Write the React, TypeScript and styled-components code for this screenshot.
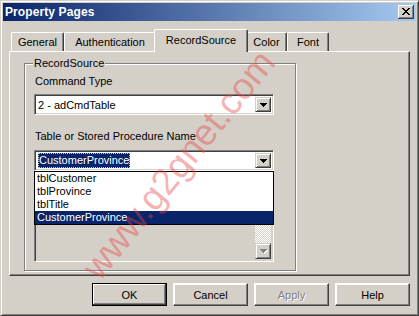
import React from 'react'
import styled, { createGlobalStyle } from 'styled-components'

const GlobalStyle = createGlobalStyle`
  body {
    margin: 0;
    background: #d4d0c8;
    font-family: "Liberation Sans", Arial, sans-serif;
    font-size: 11px;
    color: #000;
  }
`;

const tabs = [
  { label: 'General', w: 53 },
  { label: 'Authentication', w: 92 },
  { label: 'RecordSource', w: 90, active: true },
  { label: 'Color', w: 41 },
  { label: 'Font', w: 42 },
];

const items = ['tblCustomer', 'tblProvince', 'tblTitle', 'CustomerProvince'];

const xPattern = ['11....11', '.11..11.', '..1111..', '...11...', '..1111..', '.11..11.', '11....11'];

const CloseGlyph = () => (
  <svg width="8" height="7" shapeRendering="crispEdges">
    {xPattern.map((row, y) =>
      row.split('').map((c, x) => (c === '1' ? <rect key={`${x}-${y}`} x={x} y={y} width="1" height="1" fill="#000" /> : null))
    )}
  </svg>
);

const Arrow = ({ disabled }: { disabled?: boolean }) => (
  <svg width="8" height="5" shapeRendering="crispEdges">
    {disabled && <path d="M1 1h7v1H1zM2 2h5v1H2zM3 3h3v1H3zM4 4h1v1H4z" fill="#fff" />}
    <path d="M0 0h7v1H0zM1 1h5v1H1zM2 2h3v1H2zM3 3h1v1H3z" fill={disabled ? '#808080' : '#000'} />
  </svg>
);

const App = () => {
  return (
    <>
      <GlobalStyle />
      <Window>
        <TitleBar>
          <Title>Property Pages</Title>
          <CloseButton>
            <CloseGlyph />
          </CloseButton>
        </TitleBar>

        <Body>
          <TabRow>
            {tabs.map(t => (
              <Tab key={t.label} $w={t.w} $active={t.active}>
                {t.label}
              </Tab>
            ))}
          </TabRow>

          <Panel>
            <GroupBox>
              <Legend>RecordSource</Legend>
              <FieldLabel>Command Type</FieldLabel>
              <Combo $mt={6}>
                <ComboText>2 - adCmdTable</ComboText>
                <DropButton>
                  <Arrow />
                </DropButton>
              </Combo>

              <FieldLabel $mt={15}>Table or Stored Procedure Name</FieldLabel>
              <ComboWrap>
                <Combo $mt={0}>
                  <ComboText>
                    <Selected>CustomerProvince</Selected>
                  </ComboText>
                  <DropButton>
                    <Arrow />
                  </DropButton>
                </Combo>
                <DropList>
                  {items.map((it, i) => (
                    <DropItem key={it} $selected={i === items.length - 1}>
                      {it}
                    </DropItem>
                  ))}
                </DropList>
              </ComboWrap>

              <ListBox>
                <ListArea />
                <ScrollBar>
                  <ScrollButton>
                    <Arrow disabled />
                  </ScrollButton>
                  <Track />
                  <ScrollButton>
                    <Arrow disabled />
                  </ScrollButton>
                </ScrollBar>
              </ListBox>
            </GroupBox>
          </Panel>

          <ButtonRow>
            <Button $default>OK</Button>
            <Button>Cancel</Button>
            <Button $disabled>Apply</Button>
            <Button>Help</Button>
          </ButtonRow>
        </Body>

        <Watermark>
          <WatermarkText>www.g2gnet.com</WatermarkText>
        </Watermark>
      </Window>
    </>
  )
}

export default App

const Window = styled.div`
  position: relative;
  box-sizing: border-box;
  width: 419px;
  height: 316px;
  padding: 2px;
  background: #d4d0c8;
  border: 1px solid;
  border-color: #d4d0c8 #404040 #404040 #d4d0c8;
  box-shadow: inset 1px 1px #fff, inset -1px -1px #808080;
  display: flex;
  flex-direction: column;
  overflow: hidden;
`;

const TitleBar = styled.div`
  height: 18px;
  flex-shrink: 0;
  display: flex;
  align-items: center;
  justify-content: space-between;
  padding: 0 2px 0 2px;
  background: linear-gradient(to right, #0a246a, #a6caf0);
`;

const Title = styled.span`
  color: #fff;
  font-weight: bold;
  font-size: 12px;
  letter-spacing: 0.1px;
`;

const CloseButton = styled.div`
  box-sizing: border-box;
  width: 16px;
  height: 14px;
  background: #d4d0c8;
  box-shadow: inset -1px -1px #404040, inset 1px 1px #fff, inset -2px -2px #808080;
  display: flex;
  align-items: center;
  justify-content: center;
  padding: 0 1px 1px 0;
`;

const Body = styled.div`
  display: flex;
  flex-direction: column;
  padding: 8px 6px 0 6px;
`;

const TabRow = styled.div`
  height: 22px;
  display: flex;
  align-items: flex-end;
  padding-left: 2px;
`;

const Tab = styled.div<{ $w: number; $active?: boolean }>`
  box-sizing: border-box;
  position: relative;
  z-index: ${p => (p.$active ? 2 : 1)};
  width: ${p => (p.$active ? p.$w + 4 : p.$w)}px;
  height: ${p => (p.$active ? 23 : 19)}px;
  margin: 0 ${p => (p.$active ? -2 : 0)}px ${p => (p.$active ? -1 : 0)}px;
  padding-bottom: ${p => (p.$active ? 2 : 0)}px;
  background: #d4d0c8;
  border-top: 1px solid #fff;
  border-left: 1px solid #fff;
  border-right: 1px solid #404040;
  border-radius: 2px 2px 0 0;
  box-shadow: inset -1px 0 #808080;
  display: flex;
  align-items: center;
  justify-content: center;
  font-size: 11px;
  white-space: nowrap;
`;

const Panel = styled.div`
  position: relative;
  z-index: 0;
  box-sizing: border-box;
  width: 401px;
  height: 225px;
  padding: 11px 0 0 14px;
  border-top: 1px solid #fff;
  border-left: 1px solid #fff;
  border-right: 1px solid #404040;
  border-bottom: 1px solid #404040;
  box-shadow: inset -1px -1px #808080;
`;

const GroupBox = styled.div`
  position: relative;
  box-sizing: border-box;
  width: 272px;
  height: 208px;
  padding: 11px 0 0 9px;
  border: 1px solid #808080;
  box-shadow: inset 1px 1px #fff, 1px 1px #fff;
  display: flex;
  flex-direction: column;
  align-items: flex-start;
`;

const Legend = styled.span`
  position: absolute;
  top: -7px;
  left: 8px;
  padding: 0 1px 0 1px;
  line-height: 13px;
  background: #d4d0c8;
`;

const FieldLabel = styled.div<{ $mt?: number }>`
  margin-top: ${p => p.$mt ?? 0}px;
  padding-left: 1px;
  line-height: 13px;
`;

const ComboWrap = styled.div`
  position: relative;
  z-index: 3;
  margin-top: 7px;
`;

const Combo = styled.div<{ $mt: number }>`
  box-sizing: border-box;
  width: 240px;
  height: 21px;
  margin-top: ${p => p.$mt}px;
  padding: 2px;
  background: #fff;
  border: 1px solid;
  border-color: #808080 #fff #fff #808080;
  box-shadow: inset 1px 1px #404040, inset -1px -1px #d4d0c8;
  display: flex;
  align-items: stretch;
`;

const ComboText = styled.div`
  flex: 1;
  display: flex;
  align-items: center;
  padding-left: 1px;
  white-space: nowrap;
`;

const Selected = styled.span`
  background: #0a246a;
  color: #fff;
  padding: 1px 1px;
  line-height: 13px;
  outline: 1px dotted #c8c4bc;
  outline-offset: -1px;
`;

const DropButton = styled.div`
  box-sizing: border-box;
  width: 16px;
  background: #d4d0c8;
  border: 1px solid;
  border-color: #d4d0c8 #404040 #404040 #d4d0c8;
  box-shadow: inset 1px 1px #fff, inset -1px -1px #808080;
  display: flex;
  align-items: center;
  justify-content: center;
  padding: 1px 0 0 1px;
`;

const DropList = styled.div`
  position: absolute;
  top: 100%;
  left: 0;
  box-sizing: border-box;
  width: 240px;
  background: #fff;
  border: 1px solid #000;
`;

const DropItem = styled.div<{ $selected?: boolean }>`
  height: 13px;
  line-height: 13px;
  padding-left: 2px;
  background: ${p => (p.$selected ? '#0a246a' : '#fff')};
  color: ${p => (p.$selected ? '#fff' : '#000')};
`;

const ListBox = styled.div`
  box-sizing: border-box;
  width: 240px;
  height: 91px;
  padding: 2px;
  background: #d4d0c8;
  border: 1px solid;
  border-color: #808080 #fff #fff #808080;
  box-shadow: inset 1px 1px #404040, inset -1px -1px #d4d0c8;
  display: flex;
`;

const ListArea = styled.div`
  flex: 1;
`;

const ScrollBar = styled.div`
  width: 16px;
  display: flex;
  flex-direction: column;
`;

const ScrollButton = styled.div`
  box-sizing: border-box;
  height: 16px;
  background: #d4d0c8;
  border: 1px solid;
  border-color: #d4d0c8 #404040 #404040 #d4d0c8;
  box-shadow: inset 1px 1px #fff, inset -1px -1px #808080;
  display: flex;
  align-items: center;
  justify-content: center;
  padding: 1px 0 0 1px;
`;

const Track = styled.div`
  flex: 1;
  background: conic-gradient(#fff 25%, #d4d0c8 0 50%, #fff 0 75%, #d4d0c8 0) 0 0 / 2px 2px;
`;

const ButtonRow = styled.div`
  width: 401px;
  margin-top: 7px;
  display: flex;
  justify-content: flex-end;
  gap: 6px;
`;

const Button = styled.div<{ $default?: boolean; $disabled?: boolean }>`
  box-sizing: border-box;
  width: 75px;
  height: 23px;
  background: #d4d0c8;
  border: 1px solid ${p => (p.$default ? '#000' : 'transparent')};
  box-shadow: ${p =>
    p.$default
      ? 'inset -1px -1px #404040, inset 1px 1px #fff, inset -2px -2px #808080'
      : 'inset -1px -1px #808080, inset 1px 1px #fff'};
  ${p => (!p.$default ? 'border-color: #fff #404040 #404040 #fff;' : '')}
  display: flex;
  align-items: center;
  justify-content: center;
  color: ${p => (p.$disabled ? '#808080' : '#000')};
  text-shadow: ${p => (p.$disabled ? '1px 1px #fff' : 'none')};
`;

const Watermark = styled.div`
  position: absolute;
  left: 178px;
  top: 164px;
  width: 0;
  height: 0;
  pointer-events: none;
`;

const WatermarkText = styled.span`
  position: absolute;
  left: 0;
  top: 0;
  transform: translate(-50%, -50%) rotate(-51deg);
  font-family: "Liberation Sans", Arial, sans-serif;
  font-size: 37px;
  white-space: nowrap;
  color: rgba(232, 70, 70, 0.42);
`;
